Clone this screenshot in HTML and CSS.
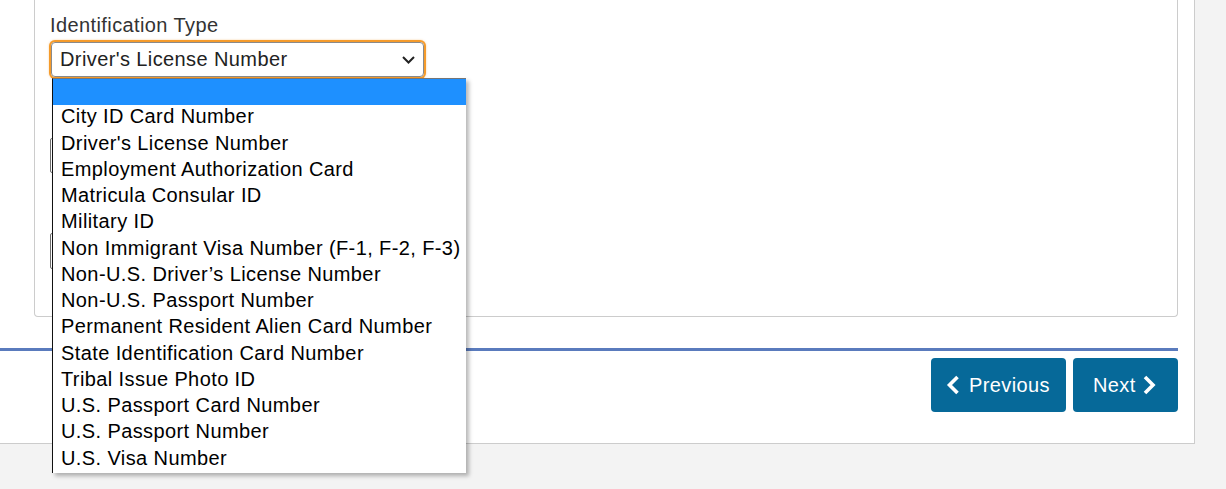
FILE: index.html
```html
<!DOCTYPE html>
<html lang="en">
<head>
<meta charset="utf-8">
<title>Identification Type</title>
<link rel="stylesheet" href="styles.css">
</head>
<body>
<div class="panel">
  <div class="card">
    <div class="field">
      <label class="label">Identification Type</label>
      <div class="select-wrap">
        <div class="select">
          <span class="select-value">Driver's License Number</span>
          <svg class="caret" width="13" height="8" viewBox="0 0 13 8"><path d="M1 1 L6.5 6.5 L12 1" fill="none" stroke="#222" stroke-width="2"/></svg>
        </div>
        <ul class="dropdown">
          <li class="opt selected">&nbsp;</li>
          <li class="opt">City ID Card Number</li>
          <li class="opt">Driver's License Number</li>
          <li class="opt">Employment Authorization Card</li>
          <li class="opt">Matricula Consular ID</li>
          <li class="opt">Military ID</li>
          <li class="opt">Non Immigrant Visa Number (F-1, F-2, F-3)</li>
          <li class="opt">Non-U.S. Driver’s License Number</li>
          <li class="opt">Non-U.S. Passport Number</li>
          <li class="opt">Permanent Resident Alien Card Number</li>
          <li class="opt">State Identification Card Number</li>
          <li class="opt">Tribal Issue Photo ID</li>
          <li class="opt">U.S. Passport Card Number</li>
          <li class="opt">U.S. Passport Number</li>
          <li class="opt">U.S. Visa Number</li>
        </ul>
      </div>
    </div>
    <div class="hidden-input first"></div>
    <div class="hidden-input second"></div>
  </div>
  <div class="nav">
    <button class="btn btn-prev" type="button">
      <svg width="14" height="20" viewBox="0 0 14 20"><path d="M11.5 2 L3.5 10 L11.5 18" fill="none" stroke="#fff" stroke-width="3.6"/></svg>
      <span>Previous</span>
    </button>
    <button class="btn btn-next" type="button">
      <span>Next</span>
      <svg width="15" height="20" viewBox="0 0 15 20"><path d="M3 2 L11 10 L3 18" fill="none" stroke="#fff" stroke-width="3.6"/></svg>
    </button>
  </div>
</div>
</body>
</html>
```
FILE: styles.css
```css
* { box-sizing: border-box; }

html, body {
  margin: 0;
  padding: 0;
  min-height: 489px;
}

body {
  background: #f3f3f3;
  font-family: "Liberation Sans", Arial, sans-serif;
  font-size: 20px;
  letter-spacing: 0.4px;
  color: #222;
}

.panel {
  width: 1195px;
  background: #fff;
  border-right: 1px solid #cccccc;
  border-bottom: 1px solid #cccccc;
  padding: 0 16px 31px 0;
}

.card {
  margin-left: 34px;
  border: 1px solid #cccccc;
  border-top: none;
  border-radius: 0 0 4px 4px;
  padding: 13px 15px 47px 15px;
}

.label {
  display: block;
  line-height: 24px;
  color: #333;
}

.select-wrap {
  position: relative;
  margin-top: 5px;
  margin-left: 1px;
  width: 373px;
}

.select {
  display: flex;
  align-items: center;
  justify-content: space-between;
  height: 35px;
  padding: 0 8px 0 8px;
  border: 1px solid #8a8a8a;
  border-radius: 4px;
  box-shadow: 0 0 0 2px #f59b2b, 0 0 2px 2px rgba(245, 155, 43, 0.5);
  line-height: 33px;
  color: #222;
}

.caret { margin-top: 1px; }

.dropdown {
  position: absolute;
  z-index: 10;
  top: 36px;
  left: 1px;
  width: 414px;
  margin: 0;
  padding: 0;
  list-style: none;
  background: #fff;
  border-top: 1px solid #767676;
  border-left: 1px solid #111;
  box-shadow: 3px 3px 4px rgba(0, 0, 0, 0.28);
  color: #000;
}

.opt {
  height: 26.27px;
  line-height: 22px;
  padding-left: 8px;
  white-space: nowrap;
}

.opt.selected {
  background: #1e90ff;
}

.hidden-input {
  width: 300px;
  border: 1px solid #707070;
  border-radius: 2px;
}

.hidden-input.first {
  margin-top: 61px;
  height: 35px;
}

.hidden-input.second {
  margin-top: 60px;
  height: 36px;
}

.nav {
  margin-top: 31px;
  border-top: 3px solid #5a7bbd;
  padding-top: 7px;
  display: flex;
  justify-content: flex-end;
  gap: 7px;
}

.btn {
  display: flex;
  align-items: center;
  height: 54px;
  border: none;
  border-radius: 4px;
  background: #066999;
  color: #fff;
  font-family: "Liberation Sans", Arial, sans-serif;
  font-size: 20px;
  letter-spacing: 0.4px;
  cursor: pointer;
}

.btn-prev {
  width: 135px;
  padding: 0 0 0 15px;
  gap: 9px;
}

.btn-next {
  width: 105px;
  padding: 0 0 0 20px;
  gap: 6px;
}
```
